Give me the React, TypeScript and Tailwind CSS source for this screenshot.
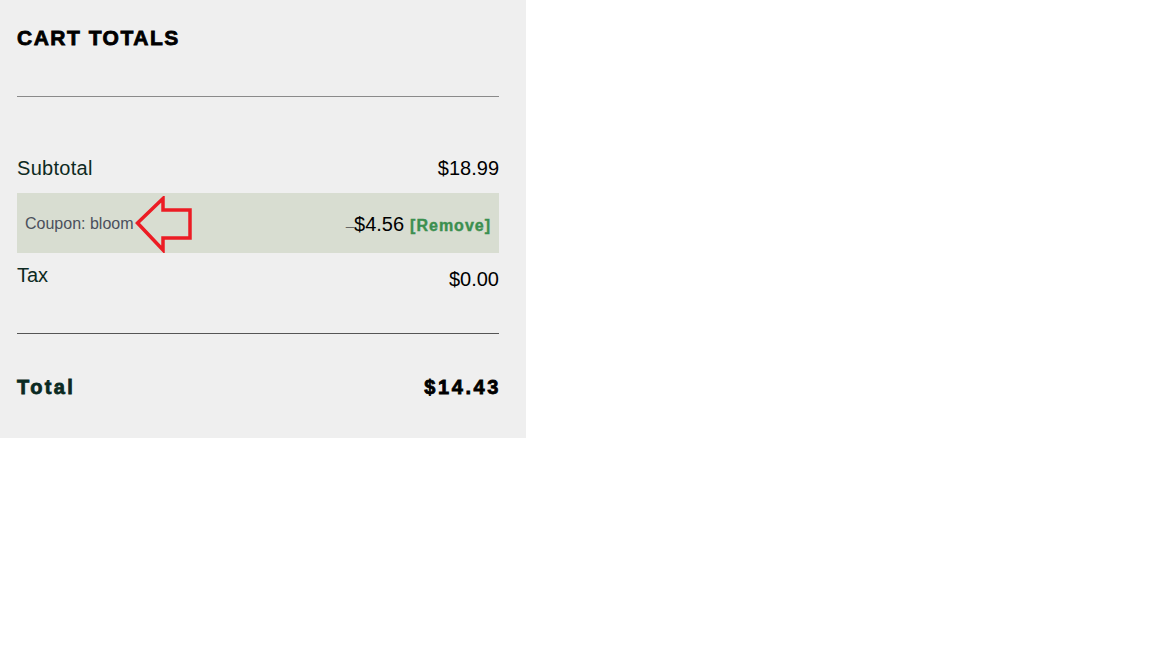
const labelFont = "font-['Liberation_Sans',Arial,sans-serif]";

function CouponArrow() {
  // red outline arrow pointing at the coupon code
  return (
    <svg
      className="absolute left-[118px] top-[3px]"
      width={58}
      height={57}
      viewBox="0 0 58 57"
      fill="none"
    >
      <polygon
        points="2.5,27 28,2.5 28,14 55,14 55,42 28,42 28,54"
        stroke="#ec1c24"
        strokeWidth={3.5}
        strokeLinejoin="miter"
        fill="none"
      />
    </svg>
  );
}

export default function App() {
  return (
    <div className={`w-full min-h-[648px] bg-white ${labelFont}`}>
      <div className="w-[526px] bg-[#efefef] pl-[17px] pr-[27px] pt-[26px]">
        <h2 className="text-[21px] leading-6 font-bold tracking-[1.5px] text-black [-webkit-text-stroke:0.8px_black]">
          CART TOTALS
        </h2>
        <div className="mt-[46px] h-px bg-[#8a8a8a]" />

        {/* Subtotal */}
        <div className="mt-[59px] h-[37px] flex justify-between items-start text-[20px] leading-6">
          <span className="tracking-[0.3px] text-[#0d2a22]">Subtotal</span>
          <span className="text-black">$18.99</span>
        </div>

        {/* Coupon */}
        <div className="relative h-[60px] bg-[#d8ddd1] flex items-center justify-between pl-2 pr-2 pt-[2px]">
          <span className="text-[16px] leading-6 text-[#4b505c]">
            Coupon: bloom
          </span>
          <div className="flex items-baseline pt-[1px]">
            <span className="text-[15px] leading-6 text-[#666]">–</span>
            <span className="text-[20px] leading-6 text-black">$4.56</span>
            <span className="ml-[6px] text-[16px] leading-6 font-bold tracking-[1px] text-[#3b8f4f] [-webkit-text-stroke:0.4px_#3b8f4f]">
              [Remove]
            </span>
          </div>
          <CouponArrow />
        </div>

        {/* Tax */}
        <div className="h-[80px] pt-[10px] flex justify-between items-start text-[20px] leading-6">
          <span className="text-[#0d2a22]">Tax</span>
          <span className="mt-1 text-black">$0.00</span>
        </div>
        <div className="h-px bg-[#555]" />

        {/* Total */}
        <div className="pt-[41px] pb-[39px] flex justify-between items-start text-[20px] leading-6 font-bold">
          <span className="tracking-[2.4px] text-[#0a2a22] [-webkit-text-stroke:0.8px_#0a2a22]">
            Total
          </span>
          <span className="tracking-[2.6px] mr-[-2px] text-black [-webkit-text-stroke:0.8px_black]">
            $14.43
          </span>
        </div>
      </div>
    </div>
  );
}
